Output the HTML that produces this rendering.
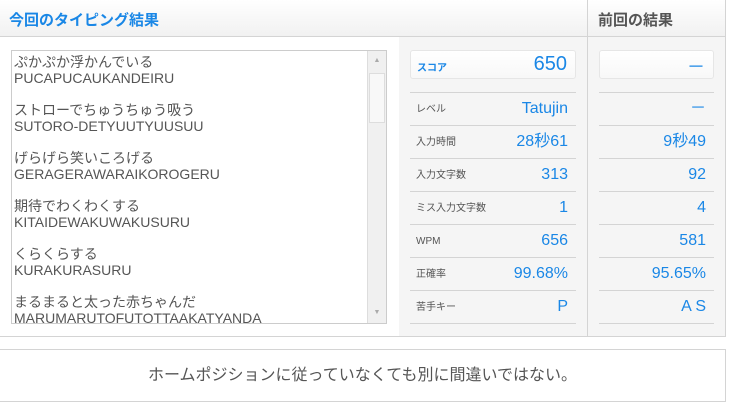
<!DOCTYPE html>
<html><head><meta charset="utf-8"><style>
*{margin:0;padding:0;box-sizing:border-box}
body{width:729px;height:406px;background:#fff;font-family:"Liberation Sans","Noto Sans CJK JP",sans-serif;position:relative;overflow:hidden}
.outer{position:absolute;left:0;top:0;width:726px;height:337px;border:1px solid #d4d4d4;border-left:none;background:#fff}
.hdr{position:absolute;left:0;top:0;width:725px;height:37px;border-bottom:1px solid #d4d4d4;background:linear-gradient(#fff,#f1f1f1)}
.h1{position:absolute;left:9px;top:9px;font-size:15px;font-weight:bold;color:#1a87e6}
.h2{position:absolute;left:598px;top:9px;font-size:15px;font-weight:bold;color:#555}
.grey{position:absolute;left:399px;top:37px;width:326px;height:299px;background:#f5f5f5}
.vdiv{position:absolute;left:587px;top:0;width:1px;height:336px;background:#d4d4d4}
.ta{position:absolute;left:11px;top:50px;width:376px;height:274px;border:1px solid #ccc;background:#fff;overflow:hidden}
.ta .t{position:absolute;left:2px;top:3px;font-size:14px;line-height:16px;color:#555;width:350px}
.sb{position:absolute;right:0;top:0;width:19px;height:272px;background:#f0f0f0;border-left:1px solid #ddd}
.thumb{position:absolute;left:1px;top:22px;width:16px;height:50px;background:#f8f8f8;border:1px solid #ddd}
.sbb{position:absolute;left:0;width:18px;height:20px;font-size:7px;color:#aaa;text-align:center;line-height:20px}
.score{position:absolute;top:50px;height:29px;background:linear-gradient(#fff,#f8f8f8);border:1px solid #e6e6e6;border-radius:3px}
.row{position:absolute;height:33px;border-top:1px solid #d4d4d4}
.lab{position:absolute;left:6px;top:10px;font-size:10px;line-height:14px;color:#555}
.val{position:absolute;right:8px;top:7px;font-size:16px;line-height:18px;color:#1a87e6;font-family:"Liberation Sans","Noto Sans CJK JP",sans-serif}
.bot{position:absolute;left:0;top:349px;width:726px;height:53px;border:1px solid #d4d4d4;border-left:none;text-align:center;line-height:52px;font-size:16px;color:#555}
</style></head><body>
<div class="outer"></div>
<div class="hdr"><div class="h1">今回のタイピング結果</div><div class="h2">前回の結果</div></div>
<div class="grey"></div>
<div class="vdiv"></div>
<div class="ta"><div class="t">ぷかぷか浮かんでいる<br>PUCAPUCAUKANDEIRU<br><br>ストローでちゅうちゅう吸う<br>SUTORO-DETYUUTYUUSUU<br><br>げらげら笑いころげる<br>GERAGERAWARAIKOROGERU<br><br>期待でわくわくする<br>KITAIDEWAKUWAKUSURU<br><br>くらくらする<br>KURAKURASURU<br><br>まるまると太った赤ちゃんだ<br>MARUMARUTOFUTOTTAAKATYANDA</div>
<div class="sb"><div class="sbb" style="top:0">▲</div><div class="thumb"></div><div class="sbb" style="bottom:0">▼</div></div></div>

<div class="score" style="left:410px;width:166px"><span style="position:absolute;left:6px;top:8px;font-size:10px;color:#1a87e6;font-weight:bold">スコア</span><span style="position:absolute;right:8px;top:2px;font-size:20px;color:#1a87e6">650</span></div>
<div class="score" style="left:599px;width:115px"><span style="position:absolute;right:8px;top:2px;font-size:18px;color:#1a87e6">－</span></div>

<div class="row" style="left:410px;top:92px;width:166px"><span class="lab">レベル</span><span class="val">Tatujin</span></div>
<div class="row" style="left:410px;top:125px;width:166px"><span class="lab">入力時間</span><span class="val">28秒61</span></div>
<div class="row" style="left:410px;top:158px;width:166px"><span class="lab">入力文字数</span><span class="val">313</span></div>
<div class="row" style="left:410px;top:191px;width:166px"><span class="lab">ミス入力文字数</span><span class="val">1</span></div>
<div class="row" style="left:410px;top:224px;width:166px"><span class="lab">WPM</span><span class="val">656</span></div>
<div class="row" style="left:410px;top:257px;width:166px"><span class="lab">正確率</span><span class="val">99.68%</span></div>
<div class="row" style="left:410px;top:290px;width:166px"><span class="lab">苦手キー</span><span class="val">P</span></div>
<div class="row" style="left:410px;top:323px;width:166px;height:1px"></div>

<div class="row" style="left:599px;top:92px;width:115px"><span class="val">－</span></div>
<div class="row" style="left:599px;top:125px;width:115px"><span class="val">9秒49</span></div>
<div class="row" style="left:599px;top:158px;width:115px"><span class="val">92</span></div>
<div class="row" style="left:599px;top:191px;width:115px"><span class="val">4</span></div>
<div class="row" style="left:599px;top:224px;width:115px"><span class="val">581</span></div>
<div class="row" style="left:599px;top:257px;width:115px"><span class="val">95.65%</span></div>
<div class="row" style="left:599px;top:290px;width:115px"><span class="val">A S</span></div>
<div class="row" style="left:599px;top:323px;width:115px;height:1px"></div>

<div class="bot">ホームポジションに従っていなくても別に間違いではない。</div>
</body></html>
